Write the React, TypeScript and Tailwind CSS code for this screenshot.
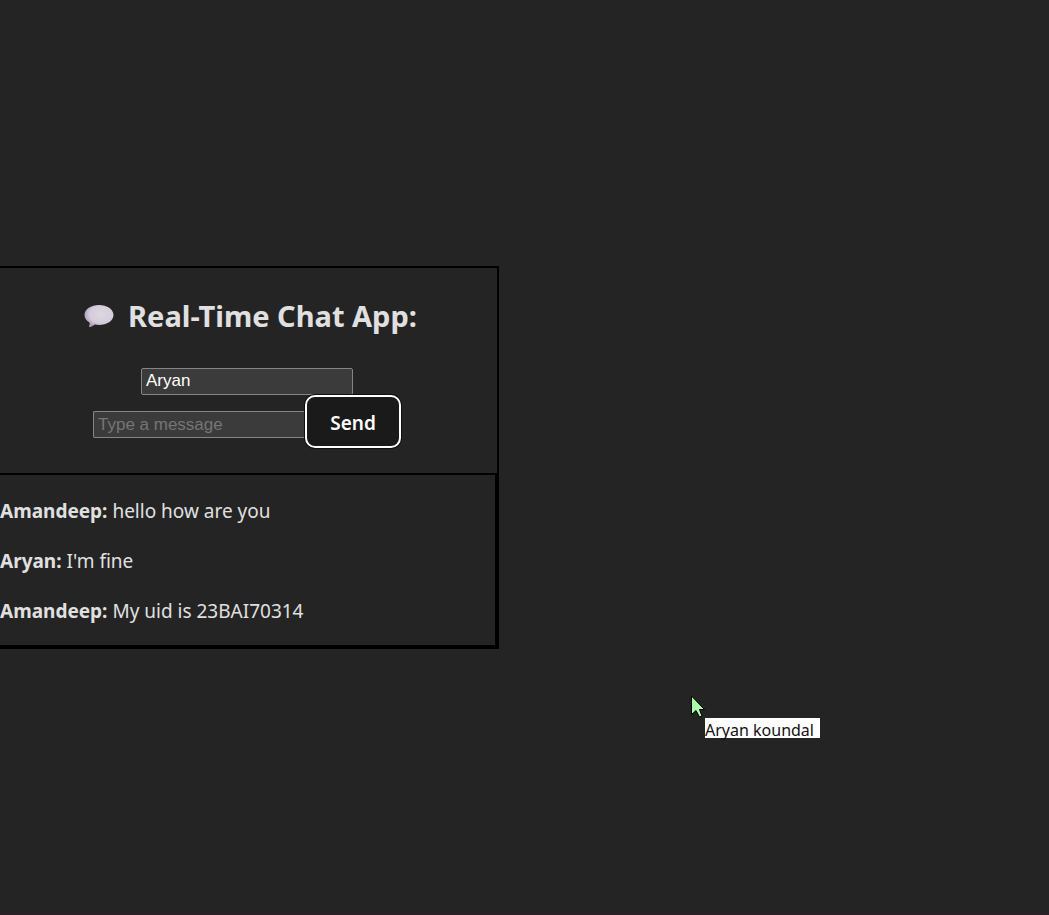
import { useState } from "react";

type Message = { author: string; text: string };

const initialMessages: Message[] = [
  { author: "Amandeep", text: "hello how are you" },
  { author: "Aryan", text: "I'm fine" },
  { author: "Amandeep", text: "My uid is 23BAI70314" },
];

const fieldClass =
  "h-[27px] w-[212px] border border-[#858585] bg-[#3b3b3b] px-1 font-['Liberation_Sans',sans-serif] text-[17px] text-white placeholder:text-[#757575] outline-none";

function SpeechBubble() {
  return (
    <svg className="h-6 w-[30px] shrink-0" viewBox="0 0 30 24" aria-hidden="true">
      <defs>
        <radialGradient id="bubble" cx="0.58" cy="0.42" r="0.62">
          <stop offset="0" stopColor="#dcd8df" />
          <stop offset="0.65" stopColor="#d5ccdb" />
          <stop offset="1" stopColor="#a99bb8" />
        </radialGradient>
      </defs>
      <path
        d="M15 1C23 1 29.500 5.200 29.500 11S23 21 15 21c-1.500 0-2.900-.1-4.200-.4-1.200 1.200-3 2.200-5.200 2.500-.6.1-.8-.3-.5-.8.500-1 .7-2.500.4-3.700C2.300 16.900.500 14 .500 11 .500 5.200 7 1 15 1z"
        fill="url(#bubble)"
      />
    </svg>
  );
}

function Pointer() {
  return (
    <div className="pointer-events-none absolute top-[695px] left-[691px]">
      <svg className="h-6 w-[15px]" viewBox="0 0 15 24" aria-hidden="true">
        <path
          d="M.5 1V19.500L5 15.500L8.500 22L11 21L8.500 14.500H13.500z"
          fill="#aaffaa"
          stroke="#000"
        />
      </svg>
      <div className="absolute top-[23px] left-[14px] h-5 w-[115px] bg-white text-base leading-6 whitespace-nowrap text-[#111]">
        Aryan koundal
      </div>
    </div>
  );
}

export default function App() {
  const [name, setName] = useState("Aryan");
  const [draft, setDraft] = useState("");
  const [messages, setMessages] = useState(initialMessages);

  const send = () => {
    if (!draft.trim()) return;
    setMessages([...messages, { author: name, text: draft }]);
    setDraft("");
  };

  return (
    <main className="relative flex min-h-screen items-center border-b-2 border-[#2a2026] bg-[#242424] pt-[2px] font-['Noto_Sans',sans-serif] text-[#e0e0e0]">
      <section className="w-full max-w-[499px] border-2 border-l-0 border-black">
        <div className="pt-6 pb-[25px]">
          <h1 className="flex items-center justify-center gap-[14px] pl-1 text-[29px] leading-[48px] font-bold">
            <SpeechBubble />
            Real-Time Chat App:
          </h1>
          <form
            className="mt-7 flex flex-col items-center pr-[3px]"
            onSubmit={(e) => {
              e.preventDefault();
              send();
            }}
          >
            <input
              aria-label="Your name"
              className={`${fieldClass} rounded-[2px] pb-[2px]`}
              value={name}
              onChange={(e) => setName(e.target.value)}
            />
            <div className="flex items-end">
              <input
                aria-label="Message"
                className={`${fieldClass} mb-[10px] rounded-l-[2px] border-r-0`}
                placeholder="Type a message"
                value={draft}
                onChange={(e) => setDraft(e.target.value)}
              />
              <button
                type="submit"
                className="h-[53px] w-24 rounded-[10px] border-2 border-white bg-[#1a1a1a] pt-1 text-[19px] font-semibold text-white ring-1 ring-[#101010]"
              >
                Send
              </button>
            </div>
          </form>
        </div>
        <div className="flex flex-col gap-5 border-2 border-l-0 border-black pt-[21px] pb-[19px]">
          {messages.map((message, i) => (
            <p key={i} className="text-[19px] leading-[30px]">
              <strong className="font-bold">{message.author}:</strong> {message.text}
            </p>
          ))}
        </div>
      </section>
      <Pointer />
    </main>
  );
}
